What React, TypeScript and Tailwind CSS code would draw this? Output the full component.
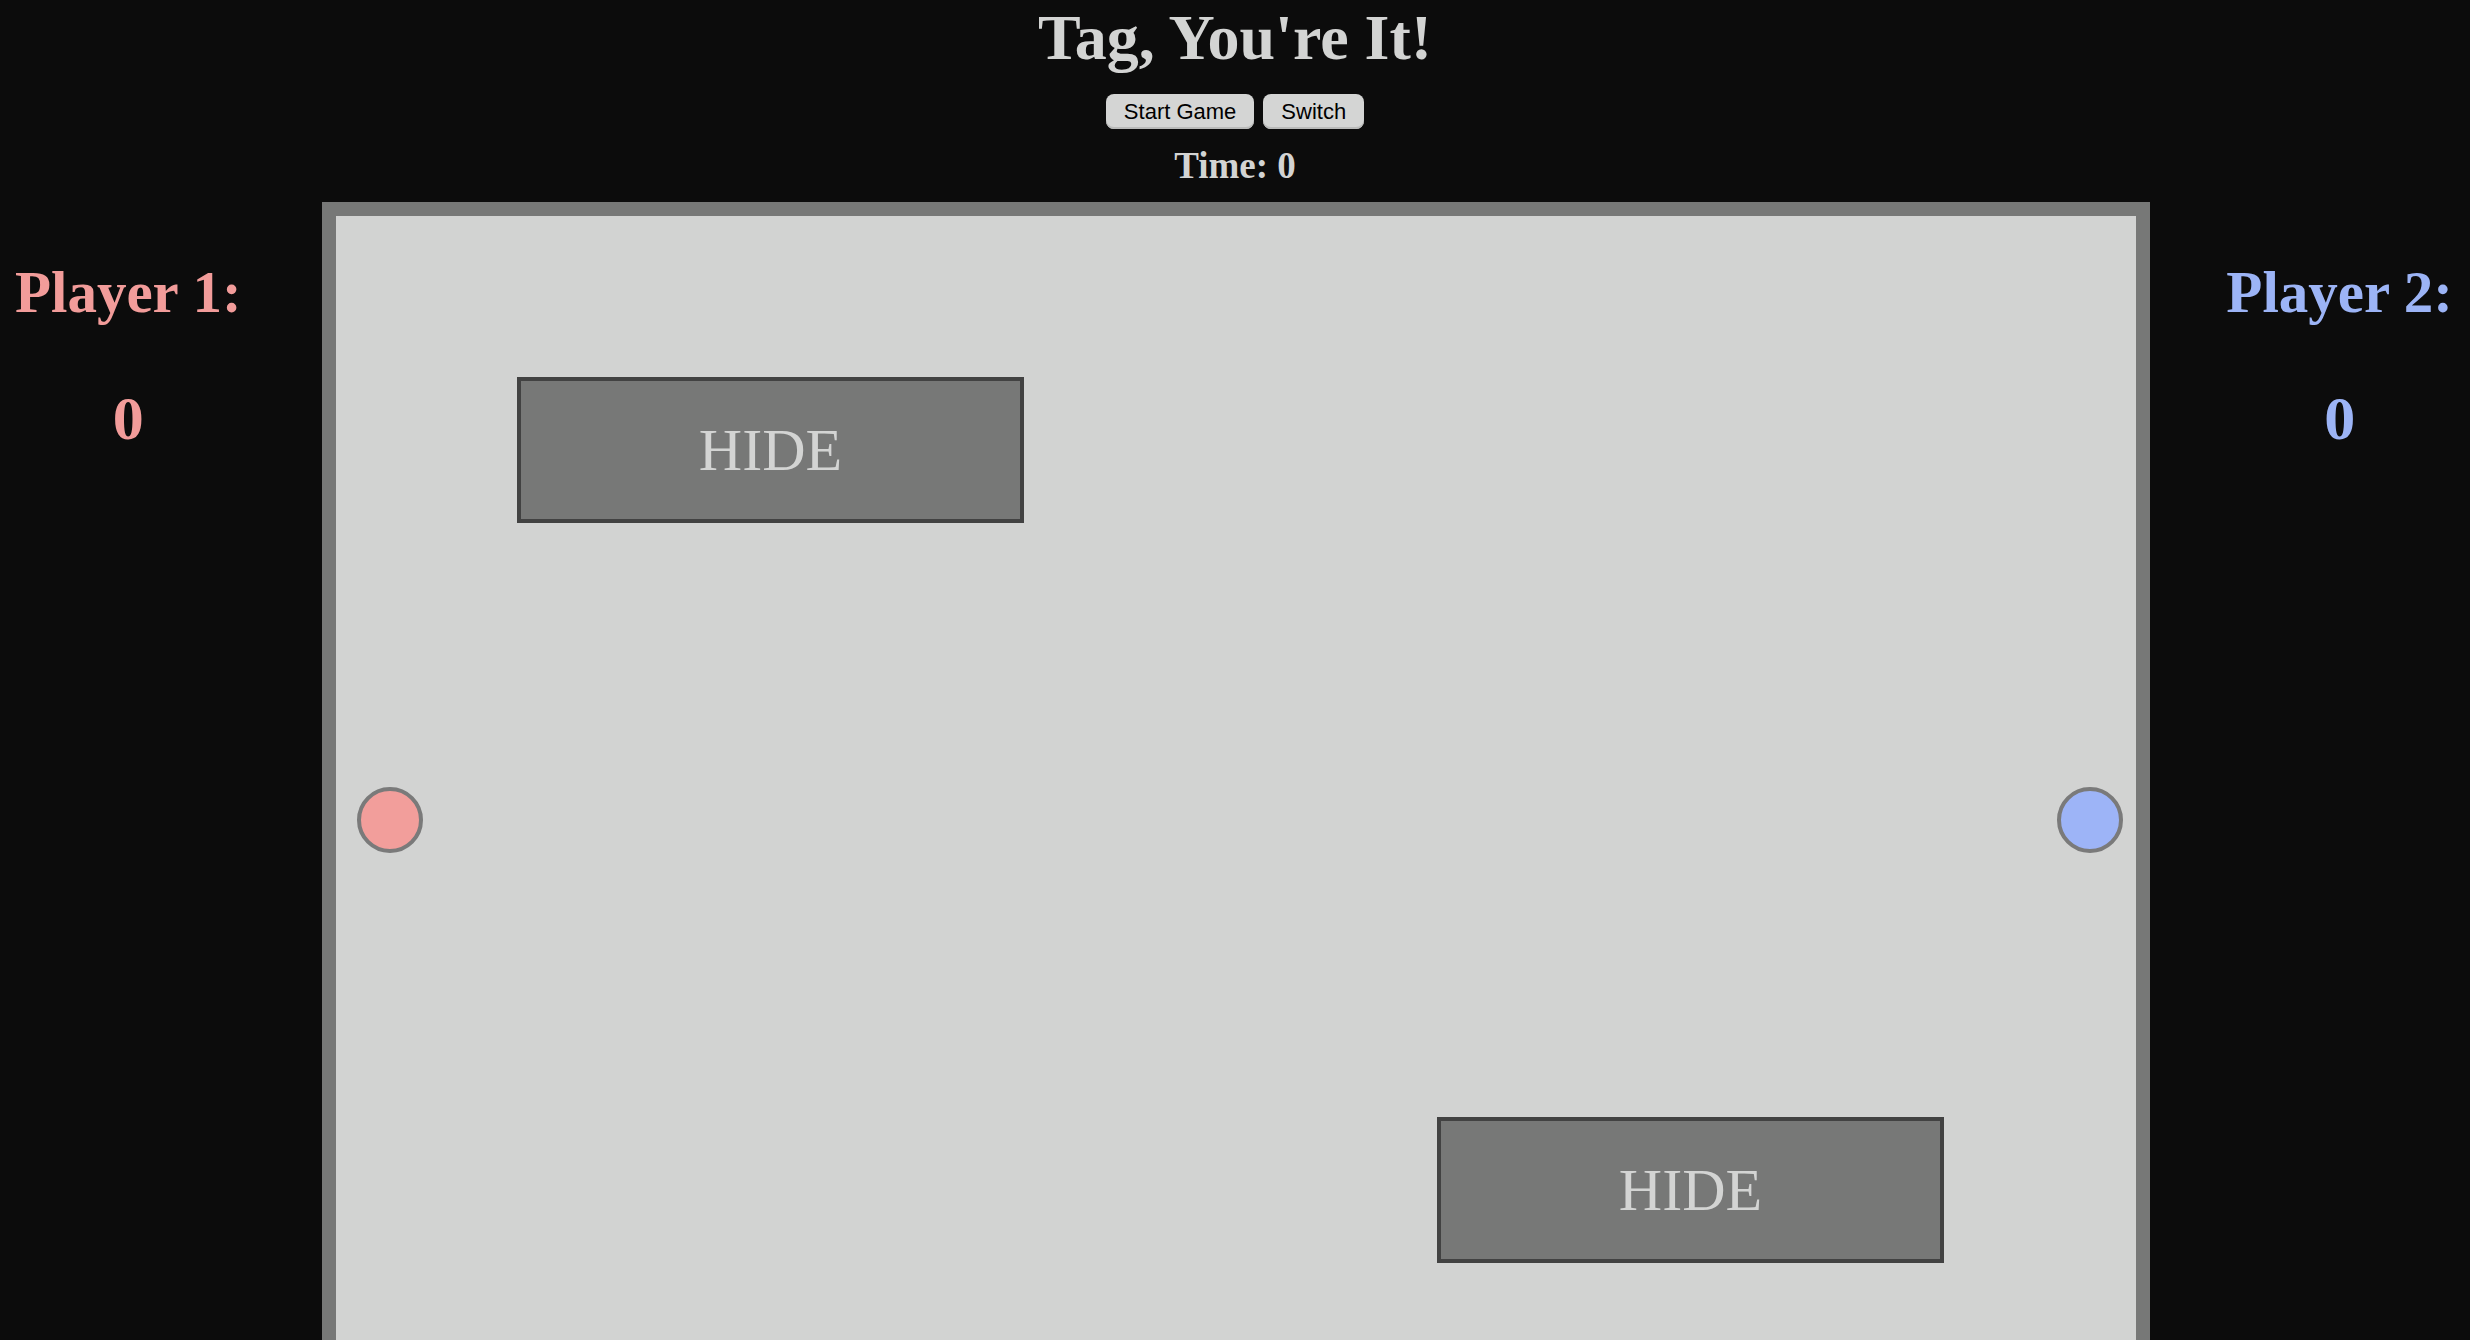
import React from "react";

const serif = "font-['Liberation_Serif','Times_New_Roman',serif]";

function HideBox({ left, top }: { left: number; top: number }) {
  return (
    <div
      className={`absolute flex h-[146px] w-[507px] items-center justify-center border-4 border-[#424242] bg-[#777877] text-[60px] leading-none text-[#d3d4d3] ${serif}`}
      style={{ left, top }}
    >
      HIDE
    </div>
  );
}

function PlayerScore({ label, color }: { label: string; color: string }) {
  return (
    <div className={`flex w-fit flex-col items-center pt-[57px] font-bold ${serif} ${color}`}>
      <h2 className="text-[59px] leading-[66px]">{label}</h2>
      <p className="mt-[58px] text-[62px] leading-[70px]">0</p>
    </div>
  );
}

export default function App() {
  return (
    <div className="h-[1340px] w-full overflow-hidden bg-[#0c0c0c]">
      {/* Header */}
      <header className="flex flex-col items-center pt-[2px]">
        <h1 className={`text-[64px] font-bold leading-[72px] text-[#d3d4d3] ${serif}`}>
          Tag, You're It!
        </h1>
        <div className="mt-[20px] flex gap-[9px]">
          <button className="h-[35px] rounded-[8px] bg-[#d4d5d4] px-[18px] font-['Liberation_Sans',Arial,sans-serif] text-[22px] leading-none text-black shadow-[inset_0_-2px_0_#b9bab9]">
            Start Game
          </button>
          <button className="h-[35px] rounded-[8px] bg-[#d4d5d4] px-[18px] font-['Liberation_Sans',Arial,sans-serif] text-[22px] leading-none text-black shadow-[inset_0_-2px_0_#b9bab9]">
            Switch
          </button>
        </div>
        <h3 className={`mt-[15px] text-[37px] font-bold leading-[44px] text-[#d3d4d3] ${serif}`}>
          Time: 0
        </h3>
      </header>

      {/* Main */}
      <main className="mt-[14px] flex">
        <div className="w-[322px] pl-[15px]">
          <PlayerScore label="Player 1:" color="text-[#f29c9a]" />
        </div>

        <div className="w-[1828px] shrink-0 border-[14px] border-[#777877]">
          <div className="relative h-[1300px] bg-[#d2d3d2]">
            <HideBox left={181} top={161} />
            <HideBox left={1101} top={901} />
            <div className="absolute left-[21px] top-[571px] h-[66px] w-[66px] rounded-full border-4 border-[#7a7a7a] bg-[#f29e9b]" />
            <div className="absolute left-[1721px] top-[571px] h-[66px] w-[66px] rounded-full border-4 border-[#7a7a7a] bg-[#9db4f7]" />
          </div>
        </div>

        <div className="flex w-[320px] justify-end pr-[17px]">
          <PlayerScore label="Player 2:" color="text-[#9cb4f6]" />
        </div>
      </main>
    </div>
  );
}
